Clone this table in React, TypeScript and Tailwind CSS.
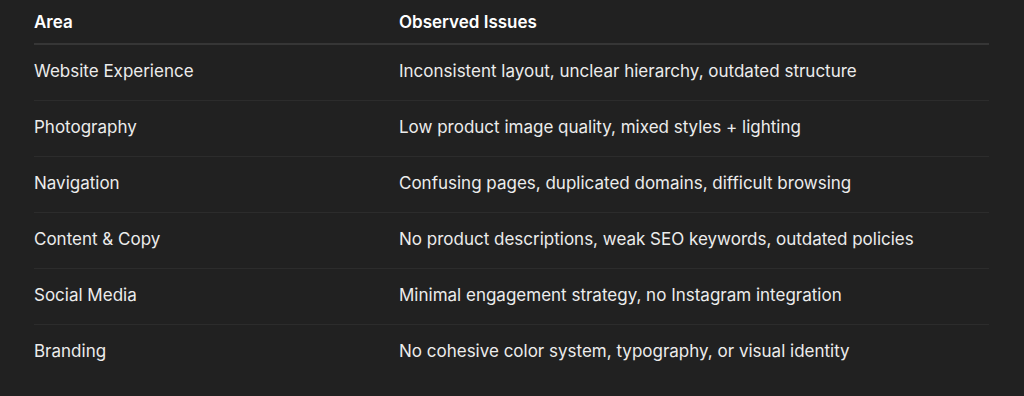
import React from 'react';

const rows = [
  { area: 'Website Experience', issues: 'Inconsistent layout, unclear hierarchy, outdated structure' },
  { area: 'Photography', issues: 'Low product image quality, mixed styles + lighting' },
  { area: 'Navigation', issues: 'Confusing pages, duplicated domains, difficult browsing' },
  { area: 'Content & Copy', issues: 'No product descriptions, weak SEO keywords, outdated policies' },
  { area: 'Social Media', issues: 'Minimal engagement strategy, no Instagram integration' },
  { area: 'Branding', issues: 'No cohesive color system, typography, or visual identity' },
];

export default function App() {
  return (
    <div className="min-h-screen w-full bg-[#212121] pl-[34px] pr-[35px] font-['Inter',sans-serif] text-[17px] text-[#ececec]">
      <table className="w-full border-collapse text-left">
        <thead>
          <tr className="h-[44px] border-b-2 border-[#363636]">
            <th className="w-[365px] p-0 pt-[2px] font-semibold text-white">Area</th>
            <th className="p-0 pt-[2px] font-semibold text-white">Observed Issues</th>
          </tr>
        </thead>
        <tbody>
          {rows.map((r, i) => (
            <tr key={r.area} className={i < rows.length - 1 ? 'h-[56px] border-b border-[#2c2c2c]' : 'h-[56px]'}>
              <td className="p-0 pb-[1px]">{r.area}</td>
              <td className="p-0 pb-[1px]">{r.issues}</td>
            </tr>
          ))}
        </tbody>
      </table>
    </div>
  );
}
